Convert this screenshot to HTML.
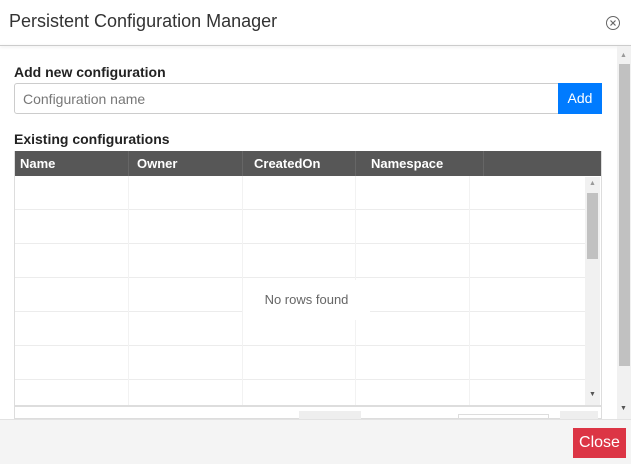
<!DOCTYPE html><html><head><style>
*{box-sizing:border-box;margin:0;padding:0}
body{width:631px;height:464px;overflow:hidden;background:#fff;font-family:"Liberation Sans",sans-serif;position:relative}
.a{position:absolute}
</style></head><body>
<div class="a" style="left:9px;top:11px;font-size:18px;color:#333">Persistent Configuration Manager</div>
<svg class="a" style="left:605px;top:15px" width="16" height="16" viewBox="0 0 16 16"><circle cx="8" cy="8" r="6.5" fill="none" stroke="#666" stroke-width="1"/><path d="M5.5 5.5L10.5 10.5M10.5 5.5L5.5 10.5" stroke="#666" stroke-width="1.2"/></svg>
<div class="a" style="left:0;top:45px;width:631px;height:1px;background:#ccc;box-shadow:0 1px 3px rgba(0,0,0,.15)"></div>
<div class="a" style="left:617px;top:46px;width:14px;height:373px;background:#f1f1f1"></div>
<div class="a" style="left:619px;top:64px;width:11px;height:302px;background:#c1c1c1"></div>
<div class="a" style="left:620px;top:52px;font-size:7px;color:#999">▲</div>
<div class="a" style="left:620px;top:405px;font-size:7px;color:#555">▼</div>
<div class="a" style="left:14px;top:64px;font-size:14px;font-weight:bold;color:#222">Add new configuration</div>
<div class="a" style="left:14px;top:83px;width:545px;height:31px;border:1px solid #ccc;border-radius:3px 0 0 3px;font-size:14px;color:#777;padding:7px 8px">Configuration name</div>
<div class="a" style="left:558px;top:83px;width:44px;height:31px;background:#007bff;color:#fff;font-size:14px;text-align:center;line-height:31px">Add</div>
<div class="a" style="left:14px;top:131px;font-size:14px;font-weight:bold;color:#222">Existing configurations</div>
<div class="a" style="left:14px;top:151px;width:588px;height:268px;border:1px solid #ddd"></div>
<div class="a" style="left:15px;top:151px;width:586px;height:25px;background:#575757;color:#fff;font-size:13px;font-weight:bold">
<span class="a" style="left:5px;top:5px">Name</span><span class="a" style="left:122px;top:5px">Owner</span><span class="a" style="left:239px;top:5px">CreatedOn</span><span class="a" style="left:356px;top:5px">Namespace</span>
<div class="a" style="left:113px;top:0;width:1px;height:25px;background:#666"></div><div class="a" style="left:227px;top:0;width:1px;height:25px;background:#666"></div><div class="a" style="left:340px;top:0;width:1px;height:25px;background:#666"></div><div class="a" style="left:468px;top:0;width:1px;height:25px;background:#666"></div>
</div>
<div class="a" style="left:15px;top:176px;width:570px;height:230px;background:
linear-gradient(#f2f2f2,#f2f2f2) 113px 0/1px 100% no-repeat,
linear-gradient(#f2f2f2,#f2f2f2) 227px 0/1px 100% no-repeat,
linear-gradient(#f2f2f2,#f2f2f2) 340px 0/1px 100% no-repeat,
linear-gradient(#f2f2f2,#f2f2f2) 454px 0/1px 100% no-repeat,
repeating-linear-gradient(#fff 0,#fff 33px,#ececec 33px,#ececec 34px)"></div>
<div class="a" style="left:243px;top:280px;width:127px;height:40px;background:#fff;font-size:13px;color:#666;text-align:center;line-height:40px">No rows found</div>
<div class="a" style="left:585px;top:177px;width:15px;height:229px;background:#f1f1f1"></div>
<div class="a" style="left:587px;top:193px;width:11px;height:66px;background:#c1c1c1"></div>
<div class="a" style="left:589px;top:180px;font-size:7px;color:#999">▲</div>
<div class="a" style="left:589px;top:391px;font-size:7px;color:#555">▼</div>
<div class="a" style="left:15px;top:405px;width:586px;height:2px;background:#ddd"></div>
<div class="a" style="left:299px;top:411px;width:62px;height:10px;background:#eee"></div>
<div class="a" style="left:458px;top:414px;width:91px;height:8px;border:1px solid #ddd"></div>
<div class="a" style="left:560px;top:411px;width:38px;height:10px;background:#eee"></div>
<div class="a" style="left:0;top:419px;width:631px;height:45px;background:#f4f4f4;border-top:1px solid #e2e2e2"></div>
<div class="a" style="left:573px;top:428px;width:53px;height:30px;background:#dc3545;color:#fff;font-size:16px;text-align:center;line-height:30px">Close</div>
</body></html>
